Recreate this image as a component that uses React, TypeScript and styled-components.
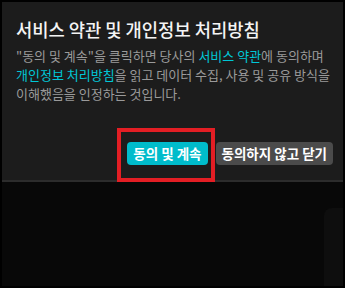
import styled, { createGlobalStyle } from "styled-components";

const GlobalStyle = createGlobalStyle`
  html, body {
    margin: 0;
    padding: 0;
    background: #000;
  }
  body {
    font-family: "Noto Sans CJK KR", "Noto Sans", sans-serif;
  }
`;

const Frame = styled.div`
  box-sizing: border-box;
  width: 345px;
  height: 288px;
  border: 2px solid #000;
  background: #080808;
  display: flex;
  flex-direction: column;
  overflow: hidden;
`;

const Dialog = styled.section`
  background: #1c1c1c;
  border-bottom: 2px solid #2c2c2c;
  padding: 16px 10px 15px 14px;
  display: flex;
  flex-direction: column;
`;

const Title = styled.h2`
  margin: 0;
  color: #f4f4f4;
  font-size: 17.7px;
  font-weight: 500;
  line-height: 22px;
  white-space: nowrap;
`;

const Body = styled.p`
  margin: 6px 0 0;
  color: #9a9a9a;
  font-size: 13px;
  line-height: 19px;
  white-space: nowrap;
`;

const Link = styled.span`
  color: #00c6d6;
`;

const Actions = styled.div`
  display: flex;
  justify-content: flex-end;
  gap: 8px;
  margin-top: 39px;
`;

const Highlight = styled.div`
  position: relative;
  display: flex;
`;

const Marker = styled.div`
  position: absolute;
  left: -10px;
  top: -14px;
  right: -7px;
  bottom: -17px;
  border: 4px solid #e31e24;
  pointer-events: none;
`;

const Button = styled.button<{ $primary?: boolean }>`
  border: none;
  border-radius: 4px;
  height: 23px;
  padding: 0 6px;
  font-family: inherit;
  font-size: 13.5px;
  font-weight: 700;
  line-height: 23px;
  color: #fff;
  background: ${(p) => (p.$primary ? "#00bccb" : "#4b4b4b")};
  cursor: pointer;
  white-space: nowrap;
`;

const Backdrop = styled.div`
  flex: 1;
  position: relative;
`;

const SideCard = styled.div`
  position: absolute;
  right: 0;
  top: 26px;
  bottom: 0;
  width: 19px;
  background: #0e0e0e;
  border-top-left-radius: 8px;
`;

export default function App() {
  return (
    <>
      <GlobalStyle />
      <Frame>
        <Dialog>
          <Title>서비스 약관 및 개인정보 처리방침</Title>
          <Body>
            "동의 및 계속"을 클릭하면 당사의 <Link>서비스 약관</Link>에 동의하며
            <br />
            <Link>개인정보 처리방침</Link>을 읽고 데이터 수집, 사용 및 공유 방식을
            <br />
            이해했음을 인정하는 것입니다.
          </Body>
          <Actions>
            <Highlight>
              <Button $primary>동의 및 계속</Button>
              <Marker />
            </Highlight>
            <Button>동의하지 않고 닫기</Button>
          </Actions>
        </Dialog>
        <Backdrop>
          <SideCard />
        </Backdrop>
      </Frame>
    </>
  );
}
